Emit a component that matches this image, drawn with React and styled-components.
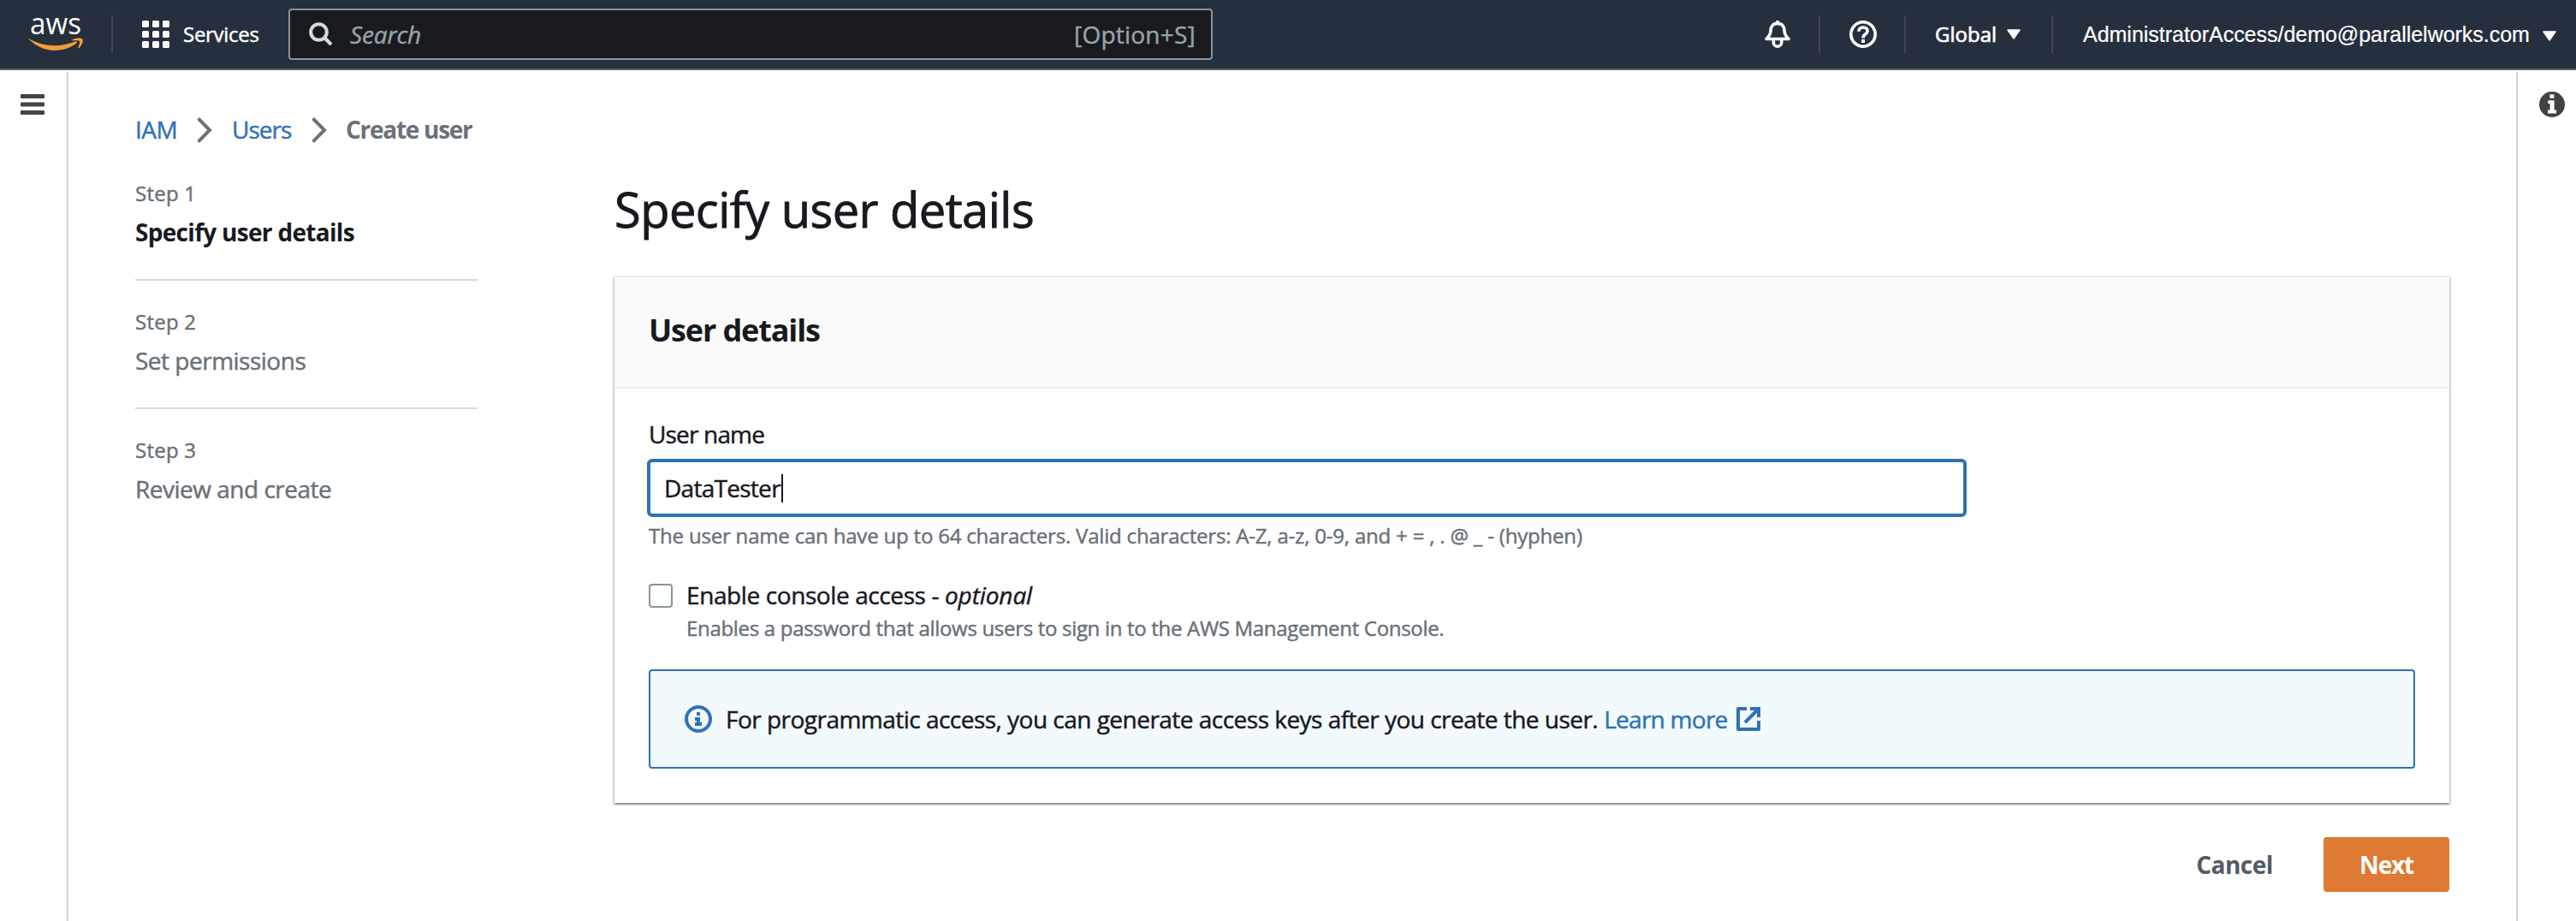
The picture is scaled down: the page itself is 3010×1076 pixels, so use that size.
import React from "react";
import styled, { createGlobalStyle } from "styled-components";

const c = {
  ink: "#18191f",
  muted: "#6a7179",
  link: "#2f72b8",
  navy: "#262f3e",
  line: "#d5dbdb",
  control: "#879596",
};

const GlobalStyle = createGlobalStyle`
  *, *::before, *::after { box-sizing: border-box; }
  body {
    margin: 0;
    background: #fff;
    color: ${c.ink};
    font-family: "Open Sans", "Noto Sans", sans-serif;
    font-size: 28px;
    line-height: 40px;
    -webkit-text-stroke: 0.45px currentColor;
  }
  svg { display: block; flex: none; }
`;

const Page = styled.div`
  display: flex;
  flex-direction: column;
  height: 1076px;
  overflow: hidden;
`;

/* Top bar */
const TopBar = styled.header`
  display: flex;
  align-items: center;
  flex: none;
  height: 82px;
  padding-left: 22px;
  background: ${c.navy};
  border-bottom: 2px solid #5a5c67;
  color: #fff;
`;
const Divider = styled.span`
  flex: none;
  width: 2px;
  height: 44px;
  background: #414750;
  margin: 0 ${(p) => p.$after}px 0 ${(p) => p.$before}px;
`;
const Services = styled.div`
  display: flex;
  align-items: center;
  gap: 16px;
  width: 171px;
  font-size: 24px;
  font-weight: 500;
  letter-spacing: -0.28px;
`;
const SearchBox = styled.div`
  display: flex;
  align-items: center;
  width: 1080px;
  height: 60px;
  padding: 0 18px 0 22px;
  border: 2px solid ${c.control};
  border-radius: 4px;
  background: #191a1f;
  color: #95a5a6;
`;
const Placeholder = styled.span`
  flex: 1;
  margin-left: 20px;
  font-style: italic;
  letter-spacing: -0.13px;
`;
const Shortcut = styled.span`
  letter-spacing: 0.23px;
`;
const NavRight = styled.div`
  display: flex;
  align-items: center;
  margin-left: auto;
`;
const Region = styled.div`
  display: flex;
  align-items: center;
  justify-content: space-between;
  width: 170px;
  padding: 0 36px 0 34px;
  font-size: 24px;
  font-weight: 500;
  -webkit-text-stroke-width: 0.7px;
`;
const Account = styled.div`
  display: flex;
  align-items: center;
  justify-content: space-between;
  width: 611px;
  padding: 0 23px 0 35px;
  font-family: "Liberation Sans", Arial, sans-serif;
  font-size: 25px;
  letter-spacing: -0.02px;
  -webkit-text-stroke-width: 0.2px;
`;

/* Body */
const Body = styled.div`
  display: flex;
  flex: 1;
`;
const Rail = styled.aside`
  flex: none;
  width: ${(p) => (p.$right ? 69 : 79)}px;
  margin-top: 2px;
  padding: ${(p) => (p.$right ? "23px 0 0 25px" : "26px 0 0 24px")};
  border-${(p) => (p.$right ? "left" : "right")}: 1px solid #c3caca;
  box-shadow: ${(p) => (p.$right ? "-1px" : "1px")} 0 1px rgba(0, 28, 36, 0.12);
`;
const Main = styled.main`
  flex: 1;
  padding: 49px 79px 0 79px;
`;
const Breadcrumbs = styled.nav`
  display: flex;
  align-items: center;
  height: 40px;
  svg { margin-top: 2px; }
`;
const Crumb = styled.span`
  flex: none;
  width: ${(p) => p.$width}px;
  margin-left: ${(p) => p.$before || 0}px;
  white-space: nowrap;
  color: ${(p) => (p.$current ? c.muted : c.link)};
  font-weight: ${(p) => (p.$current ? 700 : 400)};
  letter-spacing: ${(p) => p.$track}px;
  -webkit-text-stroke-width: ${(p) => (p.$current ? 0 : 0.45)}px;
`;
const Columns = styled.div`
  display: flex;
  gap: 160px;
  margin-top: 37px;
`;

const Steps = styled.ol`
  flex: none;
  width: 400px;
  margin: 0;
  padding: 2px 0 0;
  list-style: none;
`;
const Step = styled.li`
  height: 118px;
  margin-bottom: 32px;
  border-bottom: ${(p) => (p.$last ? "none" : `2px solid ${c.line}`)};
`;
const StepLabel = styled.div`
  font-size: 24px;
  line-height: 32px;
  letter-spacing: 0.25px;
  color: ${c.muted};
`;
const StepTitle = styled.div`
  margin-top: 9px;
  color: ${(p) => (p.$active ? c.ink : c.muted)};
  font-weight: ${(p) => (p.$active ? 700 : 400)};
  letter-spacing: ${(p) => (p.$active ? -0.7 : -0.5)}px;
  -webkit-text-stroke-width: ${(p) => (p.$active ? 0 : 0.45)}px;
`;

const Form = styled.section`
  flex: 1;
`;
const PageTitle = styled.h1`
  margin: 0 0 42px;
  font-size: 56px;
  font-weight: 400;
  line-height: 72px;
  letter-spacing: -0.52px;
  -webkit-text-stroke-width: 0.9px;
`;
const Card = styled.div`
  border-top: 2px solid #eaeded;
  background: #fff;
  box-shadow: 0 2px 2px 0 rgba(0, 28, 36, 0.3), 2px 2px 2px 0 rgba(0, 28, 36, 0.15),
    -2px 2px 2px 0 rgba(0, 28, 36, 0.15);
`;
const CardHeader = styled.div`
  height: 130px;
  padding: 40px 40px 0;
  background: #fafafa;
  border-bottom: 2px solid #eaeded;
`;
const CardTitle = styled.h2`
  margin: 0;
  font-size: 36px;
  line-height: 44px;
  font-weight: 700;
  letter-spacing: -1.13px;
  -webkit-text-stroke-width: 0;
`;
const CardBody = styled.div`
  display: flex;
  flex-direction: column;
  padding: 33px 40px 40px;
`;
const Label = styled.label`
  letter-spacing: -0.83px;
`;
const Input = styled.div`
  display: flex;
  align-items: center;
  width: 1542px;
  height: 68px;
  margin: 9px 0 6px -2px;
  padding-left: 16px;
  border: 4px solid ${c.link};
  border-radius: 6px;
  letter-spacing: -0.72px;
`;
const Caret = styled.span`
  width: 2px;
  height: 33px;
  margin-left: 1px;
  background: ${c.ink};
`;
const Hint = styled.div`
  font-size: 24px;
  line-height: 32px;
  color: ${c.muted};
  letter-spacing: ${(p) => p.$track}px;
`;
const CheckRow = styled.div`
  display: flex;
  gap: 16px;
  margin: 33px 0 32px;
`;
const Checkbox = styled.span`
  flex: none;
  width: 28px;
  height: 28px;
  margin-top: 7px;
  border: 2px solid ${c.control};
  border-radius: 4px;
`;
const CheckLabel = styled.div`
  margin-bottom: 3px;
  letter-spacing: -0.4px;
  em { letter-spacing: -0.11px; }
`;
const Alert = styled.div`
  display: flex;
  align-items: center;
  height: 116px;
  padding-left: 40px;
  border: 2px solid ${c.link};
  border-radius: 4px;
  background: #f2fafd;
`;
const AlertText = styled.span`
  margin-left: 16px;
  padding-bottom: 1px;
  letter-spacing: -0.52px;
`;
const Link = styled.a`
  margin: 0 10px 0 7px;
  padding-bottom: 1px;
  color: ${c.link};
  letter-spacing: -0.73px;
`;
const Actions = styled.div`
  display: flex;
  justify-content: flex-end;
  align-items: center;
  gap: 59px;
  margin-top: 40px;
`;
const Button = styled.button`
  height: 64px;
  padding: 0 0 1px;
  width: ${(p) => (p.$primary ? 147 : 90)}px;
  border: 0;
  border-radius: 4px;
  background: ${(p) => (p.$primary ? "#de7a33" : "transparent")};
  color: ${(p) => (p.$primary ? "#fff" : "#545b64")};
  font: 700 28px/40px "Open Sans", "Noto Sans", sans-serif;
  letter-spacing: ${(p) => (p.$primary ? -1.2 : -0.55)}px;
  -webkit-text-stroke-width: 0;
`;

const AwsLogo = () => (
  <svg width="86" height="80" viewBox="22 0 86 80">
    <text x="35" y="40.4" fill="#fff" fontFamily="Open Sans, sans-serif" fontWeight="500" fontSize="35" textLength="60" lengthAdjust="spacingAndGlyphs">aws</text>
    <path fill="#f19e38" d="M33.8 46c-.6-.5 0-.9.7-.5C43 50.400 53 53.200 63.500 53.200c8.500 0 16.200-1.600 24.500-4.800 1.600-.7 2.800 1 1.400 2.100C82.500 55.900 73.500 58.900 64.500 58.900 52.500 58.900 42 54 33.800 46z" />
    <path fill="#f19e38" d="M84.300 46.600c3-2.200 9.500-2.700 11.700-1.400 2 1.600-.2 8-3.500 10.700-.7.6-1.400.3-1.100-.5.900-2.200 2.300-6 1.600-7.300-.8-1-5-.9-8-.6-.9.1-1.200-.5-.7-.9z" />
  </svg>
);
const GridIcon = () => (
  <svg width="32" height="32" fill="#fff">
    {[0, 12, 24].flatMap((y) => [0, 12, 24].map((x) => <rect key={`${x}-${y}`} x={x} y={y} width="8" height="8" rx="1.6" />))}
  </svg>
);
const SearchIcon = () => (
  <svg width="28" height="28" fill="none" stroke="#d5dbdb" strokeWidth="4">
    <circle cx="11.500" cy="11.500" r="9.300" />
    <path d="M18 18l8 8" />
  </svg>
);
const BellIcon = () => (
  <svg width="32" height="32" fill="none" stroke="#fff" strokeWidth="3.600" strokeLinejoin="round">
    <path d="M16 0v4" />
    <path d="M3 21.500C6.500 18 8 16 8 12c0-5.500 3-8.600 8-8.600s8 3.100 8 8.600c0 4 1.500 6 5 9.500z" />
    <path d="M11.300 22v3.500a4.700 4.700 0 0 0 9.400 0V22" />
  </svg>
);
const HelpIcon = () => (
  <svg width="32" height="32" fill="none" stroke="#fff" strokeWidth="3.600">
    <circle cx="16" cy="16" r="14.200" />
    <path d="M11 12.800C11 9.600 13 8 16 8s5 1.600 5 4.400c0 3.600-5 3.400-5 8" />
    <path d="M16 22v4" strokeWidth="4" />
  </svg>
);
const Triangle = ({ drop }) => (
  <svg width="16" height={12 + drop} viewBox={`0 ${-drop} 16 ${12 + drop}`} fill="#fff" stroke="#fff" strokeWidth="1.500" strokeLinejoin="round">
    <path d="M1 1h14L8 11z" />
  </svg>
);
const MenuIcon = () => (
  <svg width="28" height="24" fill="#444">
    <rect width="28" height="5" rx="1" />
    <rect y="9.500" width="28" height="5" rx="1" />
    <rect y="19" width="28" height="5" rx="1" />
  </svg>
);
const InfoFilled = () => (
  <svg width="30" height="30">
    <circle cx="15" cy="15" r="15" fill="#424242" />
    <path fill="#fff" d="M12.400 3.200h5v4.600h-5zM10.300 10.200h7.300v11.300h2.400v4H10v-4h2.600v-7.400h-2.300z" />
  </svg>
);
const InfoOutline = () => (
  <svg width="32" height="32">
    <circle cx="16" cy="16" r="14" fill="none" stroke={c.link} strokeWidth="4" />
    <path fill={c.link} d="M14 8h4v4h-4zM12 14h6v6h2v4h-8v-4h2v-2h-2z" />
  </svg>
);
const Chevron = () => (
  <svg width="18" height="30" fill="none" stroke={c.muted} strokeWidth="4">
    <path d="M1.600 1.400L15 15 1.600 28.600" />
  </svg>
);
const ExternalIcon = () => (
  <svg width="28" height="28" fill="none" stroke={c.link} strokeWidth="4">
    <path d="M12 2H2v24h24V16" strokeLinejoin="round" />
    <path d="M16 2h10v10M26 2L10 18" />
  </svg>
);

const steps = ["Specify user details", "Set permissions", "Review and create"];

export default function App() {
  return (
    <Page>
      <GlobalStyle />
      <TopBar>
        <AwsLogo />
        <Divider $before={22} $after={34} />
        <Services><GridIcon />Services</Services>
        <SearchBox>
          <SearchIcon />
          <Placeholder>Search</Placeholder>
          <Shortcut>[Option+S]</Shortcut>
        </SearchBox>
        <NavRight>
          <BellIcon />
          <Divider $before={32} $after={34} />
          <HelpIcon />
          <Divider $before={32} $after={0} />
          <Region>Global<Triangle drop={0} /></Region>
          <Divider $before={0} $after={0} />
          <Account>AdministratorAccess/demo@parallelworks.com<Triangle drop={4} /></Account>
        </NavRight>
      </TopBar>
      <Body>
        <Rail><MenuIcon /></Rail>
        <Main>
          <Breadcrumbs>
            <Crumb $width={72} $track={-0.5}>IAM</Crumb>
            <Chevron />
            <Crumb $before={23} $width={93} $track={-1}>Users</Crumb>
            <Chevron />
            <Crumb $current $before={22} $width={180} $track={-1.28}>Create user</Crumb>
          </Breadcrumbs>
          <Columns>
            <Steps>
              {steps.map((title, i) => (
                <Step key={title} $last={i === steps.length - 1}>
                  <StepLabel>Step {i + 1}</StepLabel>
                  <StepTitle $active={i === 0}>{title}</StepTitle>
                </Step>
              ))}
            </Steps>
            <Form>
              <PageTitle>Specify user details</PageTitle>
              <Card>
                <CardHeader><CardTitle>User details</CardTitle></CardHeader>
                <CardBody>
                  <Label>User name</Label>
                  <Input>DataTester<Caret /></Input>
                  <Hint $track={-0.19}>
                    The user name can have up to 64 characters. Valid characters: A-Z, a-z, 0-9, and + = , . @ _ - (hyphen)
                  </Hint>
                  <CheckRow>
                    <Checkbox />
                    <div>
                      <CheckLabel>Enable console access - <em>optional</em></CheckLabel>
                      <Hint $track={-0.31}>Enables a password that allows users to sign in to the AWS Management Console.</Hint>
                    </div>
                  </CheckRow>
                  <Alert>
                    <InfoOutline />
                    <AlertText>For programmatic access, you can generate access keys after you create the user.</AlertText>
                    <Link>Learn more</Link>
                    <ExternalIcon />
                  </Alert>
                </CardBody>
              </Card>
              <Actions>
                <Button>Cancel</Button>
                <Button $primary>Next</Button>
              </Actions>
            </Form>
          </Columns>
        </Main>
        <Rail $right><InfoFilled /></Rail>
      </Body>
    </Page>
  );
}
